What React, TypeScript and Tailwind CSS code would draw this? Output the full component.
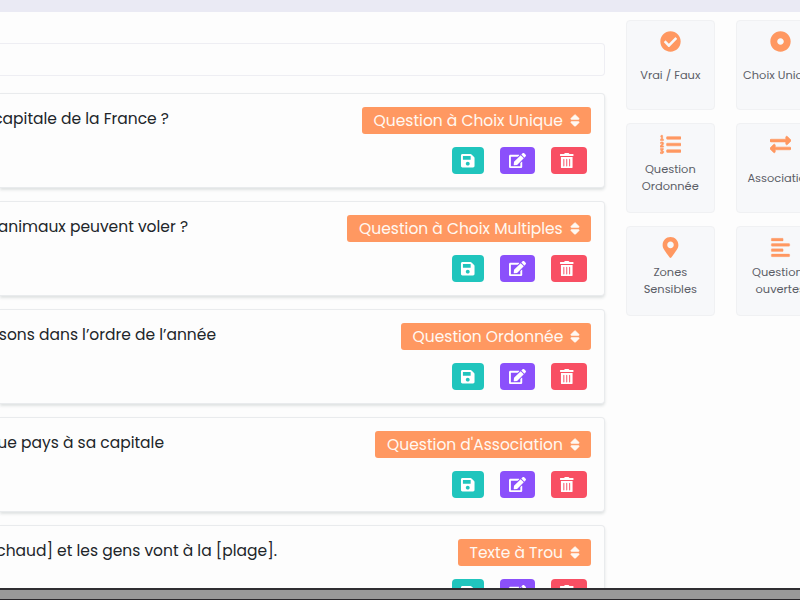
import { FaSort, FaSave, FaEdit, FaTrashAlt, FaCheckCircle, FaDotCircle, FaListOl, FaExchangeAlt, FaMapMarkerAlt, FaAlignLeft } from "react-icons/fa";
import type { ReactNode } from "react";

interface Question {
  title: string;
  titleClass: string;
  kind: string;
  buttonClass: string;
}

const questions: Question[] = [
  { title: "capitale de la France ?", titleClass: "w-[169px]", kind: "Question à Choix Unique", buttonClass: "w-[229px]" },
  { title: "animaux peuvent voler ?", titleClass: "w-[188px]", kind: "Question à Choix Multiples", buttonClass: "w-[243.5px]" },
  { title: "sons dans l’ordre de l’année", titleClass: "w-[216px]", kind: "Question Ordonnée", buttonClass: "w-[190px]" },
  { title: "que pays à sa capitale", titleClass: "w-[164px]", kind: "Question d'Association", buttonClass: "w-[215.5px]" },
  { title: "chaud] et les gens vont à la [plage].", titleClass: "w-[277px]", kind: "Texte à Trou", buttonClass: "w-[133px]" },
];

function QuestionCard({ q }: { q: Question }) {
  return (
    <div className="flex h-[95px] shrink-0 justify-between rounded-r-[4px] border border-l-0 border-[#e9ebed] bg-[#fdfdfd] pr-[13px] pt-[13px] shadow-[0_2px_3px_rgba(20,50,50,0.13)]">
      <div className={`flex h-6 justify-end whitespace-nowrap text-[15.5px] leading-[23px] text-[#212529] ${q.titleClass}`}>
        <span>{q.title}</span>
      </div>
      <div className="flex flex-col items-end">
        <div className={`flex h-[26.5px] items-center justify-between rounded-[3px] bg-[#ff9861] pl-3 pr-[11px] text-[15.5px] leading-[23px] text-[#fff8f2] ${q.buttonClass}`}>
          <span className="whitespace-nowrap">{q.kind}</span>
          <FaSort className="h-[15px] w-[10px] shrink-0 stroke-[20]" />
        </div>
        <div className="mr-1 mt-[13.6px] flex gap-4 text-white">
          <div className="flex h-[27px] w-[31.5px] items-center justify-center rounded-[4px] bg-[#20c5bd]"><FaSave className="size-[15.5px]" /></div>
          <div className="flex h-[27px] w-[35px] items-center justify-center rounded-[4px] bg-[#8b50fb]"><FaEdit className="size-[17px]" /></div>
          <div className="flex h-[27px] w-[36px] items-center justify-center rounded-[4px] bg-[#f84f63]"><FaTrashAlt className="mr-1 size-[15.5px]" /></div>
        </div>
      </div>
    </div>
  );
}

function Tile({ icon, children }: { icon: ReactNode; children: ReactNode }) {
  return (
    <div className="flex h-[89.5px] w-[89px] flex-col items-center rounded-[4px] border border-[#f0f1f3] bg-[#f7f8fa]">
      <div className="flex h-[41px] w-full items-center justify-center text-[#ff9861]">{icon}</div>
      <div className="-mt-[3px] flex h-8 w-full flex-col items-center justify-center whitespace-nowrap text-[11.4px] leading-[17px] text-[#5b5d66]">{children}</div>
    </div>
  );
}

export default function App() {
  return (
    <div className="flex h-[600px] w-[800px] flex-col overflow-hidden bg-[#fdfdfd] font-['Poppins','Inter',sans-serif]">
      <div className="h-3 shrink-0 bg-[#eaeaf4]" />
      <div className="flex h-[576px] shrink-0 overflow-hidden">
        <div className="flex w-[604.6px] shrink-0 flex-col">
          <div className="mb-[17.5px] mt-[30.6px] h-[33px] shrink-0 rounded-r-[4px] border border-l-0 border-[#eeeef3]" />
          <div className="flex flex-col gap-[13px]">
            {questions.map((q) => <QuestionCard key={q.kind} q={q} />)}
          </div>
        </div>
        <div className="ml-[21.2px] mt-2 grid shrink-0 auto-rows-min grid-cols-[89px_89px] gap-x-[21px] gap-y-[13.5px]">
          <Tile icon={<FaCheckCircle className="size-[21px]" />}>Vrai / Faux</Tile>
          <Tile icon={<FaDotCircle className="size-[21px]" />}>Choix Unique</Tile>
          <Tile icon={<FaListOl className="size-[21px] stroke-[14]" />}><span>Question</span><span>Ordonnée</span></Tile>
          <Tile icon={<FaExchangeAlt className="size-[21px] stroke-[16]" />}>Association</Tile>
          <Tile icon={<FaMapMarkerAlt className="size-[21px]" />}><span>Zones</span><span>Sensibles</span></Tile>
          <Tile icon={<FaAlignLeft className="size-[21px] stroke-[8]" />}><span>Questions</span><span>ouvertes</span></Tile>
        </div>
      </div>
      <div className="h-3 shrink-0 border-b border-t-2 border-b-[#29272b] border-t-[#302e32] bg-[#999999]" />
    </div>
  );
}
